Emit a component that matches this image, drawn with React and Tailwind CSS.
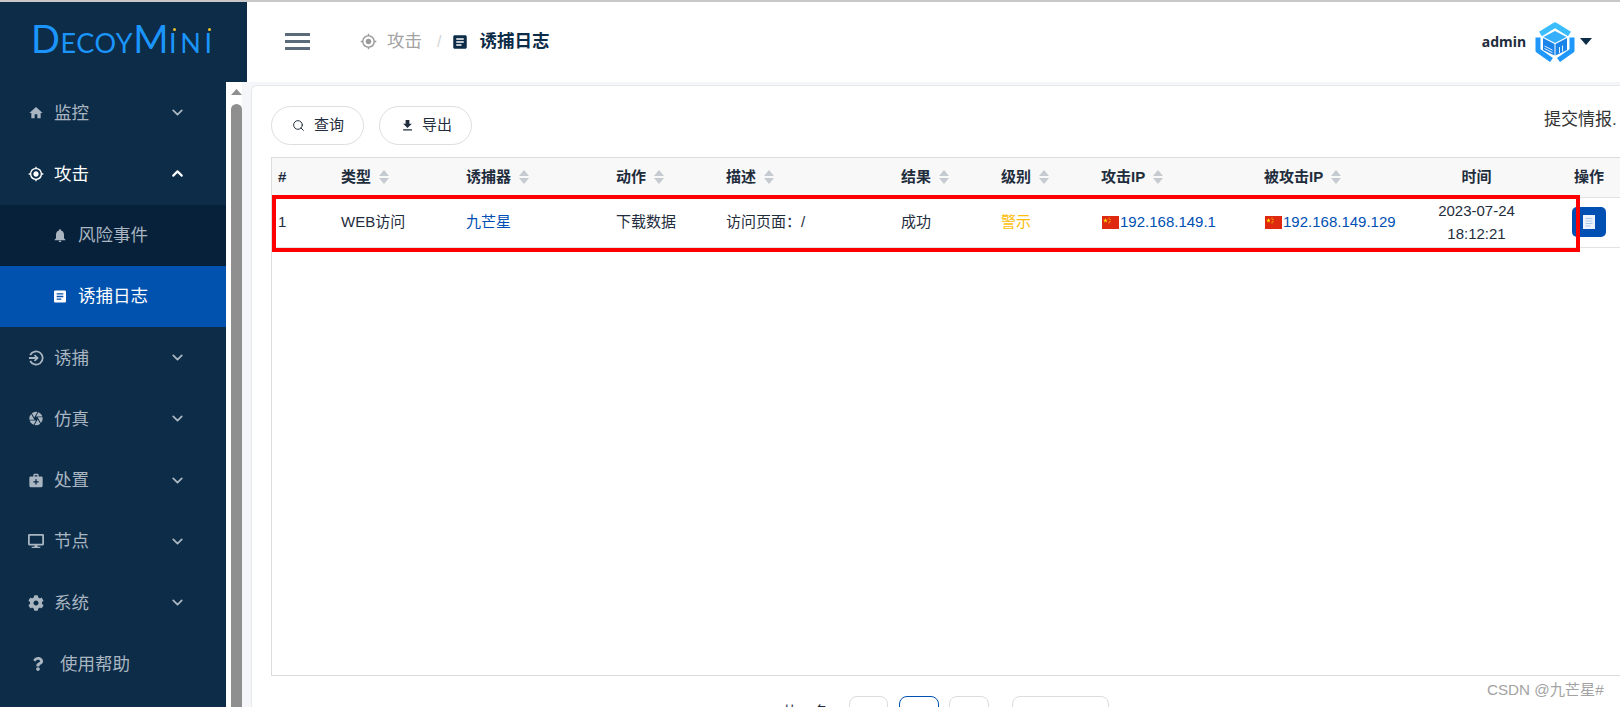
import React from "react";
import { MdHome, MdGpsFixed, MdNotifications, MdArticle, MdCamera, MdMedicalServices, MdFileDownload } from "react-icons/md";
import { FaCog, FaQuestion, FaDesktop } from "react-icons/fa";
import { ChevronDown, ChevronUp, Search } from "lucide-react";

const font = { fontFamily: '"Liberation Sans","Noto Sans CJK SC",sans-serif' };

function TrapIcon() {
  return (
    <svg width="16" height="16" viewBox="0 0 16 16" fill="none" stroke="currentColor" strokeWidth="1.8">
      <path d="M2.2 5a6.6 6.6 0 1 1 0 6" />
      <path d="M1 8h8M6.5 5.2 9.5 8l-3 2.8" />
    </svg>
  );
}

function Sort() {
  return (
    <svg width="10" height="14" viewBox="0 0 10 14" className="ml-[8px] shrink-0" fill="#c6cad1">
      <path d="M5 0 10 6H0z" />
      <path d="M0 8h10l-5 6z" />
    </svg>
  );
}

function Flag() {
  return (
    <svg width="17" height="13" viewBox="0 0 17 13" className="ml-[1px] mr-[1px] shrink-0">
      <rect width="17" height="13" fill="#de2910" />
      <path d="M3.5 2 4.1 3.7 5.9 3.7 4.4 4.8 5 6.5 3.5 5.4 2 6.5 2.6 4.8 1.1 3.7 2.9 3.7z" fill="#ffde00" />
      <circle cx="7" cy="2" r=".6" fill="#ffde00" />
      <circle cx="8" cy="3.5" r=".6" fill="#ffde00" />
      <circle cx="8" cy="5.3" r=".6" fill="#ffde00" />
      <circle cx="7" cy="6.8" r=".6" fill="#ffde00" />
    </svg>
  );
}

function Avatar() {
  return (
    <svg width="40" height="40" viewBox="0 0 40 40" fill="none">
      <path d="M5.5 12 20 3l14.5 9" stroke="#3bbdfb" strokeWidth="5.5" strokeLinejoin="round" />
      <path d="M3 15.5v13l13.5 9.5" stroke="#1f97fb" strokeWidth="5" strokeLinejoin="round" />
      <path d="M37 15.5v13l-13.5 9.5" stroke="#1f97fb" strokeWidth="5" strokeLinejoin="round" />
      <path d="M20 9 31.5 15 20 21 8.5 15z" fill="#35aefc" />
      <path d="M8 16l11.5 6v11.5L8 28z" fill="#1b84e8" />
      <path d="M32 16l-11.5 6v11.5L32 28z" fill="#1b84e8" />
      <path d="M9.5 24l8 4.2M9.5 26.5l8 4.2" stroke="#dff1ff" strokeWidth="1" />
      <path d="M24.5 25v6M27.5 23.5v6" stroke="#dff1ff" strokeWidth="1" />
    </svg>
  );
}

function Logo() {
  const big = "text-[38px] leading-none";
  const small = "text-[27px] leading-none";
  const Dot = ({ c }) => (
    <span className="relative">
      {c}
      <span className="absolute left-[4px] top-[-1px] h-[3px] w-[3px] rounded-full bg-[#ecc22a]" />
    </span>
  );
  return (
    <div className="flex items-baseline text-[#1b95fb] font-normal tracking-[0.6px]" style={{ fontFamily: "Lato, sans-serif" }}>
      <span className={big}>D</span>
      <span className={small}>ECOY</span>
      <span className={big}>M</span>
      <span className={small + " flex items-baseline gap-[3px]"}>
        <Dot c="I" />
        <span>N</span>
        <Dot c="I" />
      </span>
    </div>
  );
}

const menu = [
  { label: "监控", icon: <MdHome size={20} />, arrow: "down" },
  { label: "攻击", icon: <MdGpsFixed size={18} />, arrow: "up", open: true },
  { label: "风险事件", icon: <MdNotifications size={19} />, sub: true },
  { label: "诱捕日志", icon: <MdArticle size={19} />, sub: true, active: true },
  { label: "诱捕", icon: <TrapIcon />, arrow: "down" },
  { label: "仿真", icon: <MdCamera size={19} />, arrow: "down" },
  { label: "处置", icon: <MdMedicalServices size={19} />, arrow: "down" },
  { label: "节点", icon: <FaDesktop size={16} />, arrow: "down" },
  { label: "系统", icon: <FaCog size={16} />, arrow: "down" },
];

function MenuItem({ item }) {
  const bg = item.active ? "bg-[#0152ae] text-white" : item.sub ? "bg-[#07213a] text-[#a9b5c0]" : item.open ? "text-white" : "text-[#a9b5c0]";
  return (
    <div className={"flex h-[61.25px] items-center " + bg + (item.sub ? " pl-[52px]" : " pl-[28px]")}>
      <span className={"flex w-[16px] shrink-0 items-center justify-center"}>{item.icon}</span>
      <span className="ml-[10px] text-[17.5px]">{item.label}</span>
      {item.arrow === "down" && <ChevronDown size={17} strokeWidth={2.6} className="ml-auto mr-[40px]" />}
      {item.arrow === "up" && <ChevronUp size={17} strokeWidth={3} className="ml-auto mr-[40px]" />}
    </div>
  );
}

const cols = [
  ["#", 63, false],
  ["类型", 125, true],
  ["诱捕器", 150, true],
  ["动作", 110, true],
  ["描述", 175, true],
  ["结果", 100, true],
  ["级别", 100, true],
  ["攻击IP", 163, true],
  ["被攻击IP", 163, true],
];

function Ip({ v }) {
  return (
    <span className="flex items-center text-[15px] text-[#0050b3]">
      <Flag />
      {v}
    </span>
  );
}

export default function App() {
  return (
    <div className="flex h-[707px] w-[1620px] flex-col overflow-hidden border-t-2 border-[#c8c8c8] bg-white text-[#1f2d3d]" style={font}>
      <div className="flex h-[80px] shrink-0">
        <div className="flex w-[247px] shrink-0 items-center bg-[#0d2c48] pb-[8px] pl-[31px]">
          <Logo />
        </div>
        <div className="flex flex-1 items-center pb-[1px]">
          <svg width="25" height="17" viewBox="0 0 25 17" className="ml-[38px]" fill="#5b6b7a">
            <rect width="25" height="3" />
            <rect y="7" width="25" height="3" />
            <rect y="14" width="25" height="3" />
          </svg>
          <MdGpsFixed size={17} className="ml-[50px] text-[#9a9a9a]" />
          <span className="ml-[10px] text-[17.5px] text-[#a3a3a3]">攻击</span>
          <span className="ml-[15px] text-[16px] text-[#d4d4d4]">/</span>
          <MdArticle size={18} className="ml-[10px] text-[#0d2c48]" />
          <span className="ml-[10px] text-[17.5px] font-bold text-[#0d2c48]">诱捕日志</span>
          <span className="ml-auto text-[14px] font-bold text-[#1f2d3d]" style={{ fontFamily: '"Noto Sans",sans-serif' }}>admin</span>
          <span className="ml-[9px]"><Avatar /></span>
          <svg width="12" height="7" viewBox="0 0 12 7" className="ml-[5px] mr-[28px]" fill="#0d2c48">
            <path d="M0 0h12L6 7z" />
          </svg>
        </div>
      </div>

      <div className="flex min-h-0 flex-1">
        <div className="w-[226px] shrink-0 bg-[#0d2c48]">
          {menu.map((m) => (
            <MenuItem key={m.label} item={m} />
          ))}
          <div className="flex h-[61.25px] items-center pl-[31px] text-[#a9b5c0]">
            <FaQuestion size={14} />
            <span className="ml-[15px] text-[17.5px]">使用帮助</span>
          </div>
        </div>

        <div className="flex w-[16px] shrink-0 flex-col items-center bg-white pl-[5px] pt-[7px]">
          <svg width="11" height="6" viewBox="0 0 11 6" fill="#8f8f8f">
            <path d="M5.5 0 11 6H0z" />
          </svg>
          <div className="mt-[9px] w-[11px] flex-1 rounded-t-full bg-[#8f8f8f]" />
        </div>

        <div className="relative min-w-0 flex-1 bg-[#f5f6f9] pl-[9px] pt-[3px]">
          <div className="h-full w-[1450px] rounded-tl-md border-l border-t border-[#e9e9e9] bg-white pl-[19px] pt-[20px]">
            <div className="flex w-[1376px] items-start">
              <button className="flex h-[39px] w-[93px] items-center rounded-full border border-[#dedede] bg-white pl-[20px] text-[15px]">
                <Search size={13} strokeWidth={1.8} />
                <span className="ml-[9px]">查询</span>
              </button>
              <button className="ml-[15px] flex h-[39px] w-[93px] items-center rounded-full border border-[#dedede] bg-white pl-[20px] text-[15px]">
                <MdFileDownload size={15} />
                <span className="ml-[7px]">导出</span>
              </button>
              <span className="ml-auto w-[103px] whitespace-nowrap pt-[1px] text-[17px] text-[#333]">提交情报.</span>
            </div>

            <div className="relative mt-[12px] h-[519px] w-[1376px] border border-[#dcdcdc]">
              <table className="w-[1374px] table-fixed border-collapse text-[15px]">
                <colgroup>
                  {cols.map((c) => (
                    <col key={c[0]} style={{ width: c[1] }} />
                  ))}
                  <col style={{ width: 111 }} />
                  <col style={{ width: 114 }} />
                </colgroup>
                <thead>
                  <tr className="h-[39px] border-b border-[#e3e3e3] bg-[#f8f8f8]">
                    {cols.map((c) => (
                      <th key={c[0]} className="px-[6px] text-left font-bold">
                        <span className="flex items-center">
                          {c[0]}
                          {c[2] && <Sort />}
                        </span>
                      </th>
                    ))}
                    <th className="text-center font-bold">时间</th>
                    <th className="text-center font-bold">操作</th>
                  </tr>
                </thead>
                <tbody>
                  <tr className="h-[50px] border-b border-[#e3e3e3]">
                    <td className="px-[6px]">1</td>
                    <td className="px-[6px]">WEB访问</td>
                    <td className="px-[6px] text-[#0050b3]">九芒星</td>
                    <td className="px-[6px]">下载数据</td>
                    <td className="px-[6px]">访问页面：/</td>
                    <td className="px-[6px]">成功</td>
                    <td className="px-[6px] text-[#fcbc0a]">警示</td>
                    <td className="px-[6px]"><Ip v="192.168.149.1" /></td>
                    <td className="px-[6px]"><Ip v="192.168.149.129" /></td>
                    <td className="text-center leading-[23px]">2023-07-24<br />18:12:21</td>
                    <td className="text-center">
                      <span className="inline-flex h-[30px] w-[34px] items-center justify-center rounded-[5px] bg-[#0050b3] align-middle">
                        <svg width="12" height="14" viewBox="0 0 12 14">
                          <rect width="12" height="14" fill="#eef2fa" />
                          <path d="M2.5 3.5h7M2.5 6h7M2.5 8.5h7M2.5 11h5" stroke="#a9c9ec" strokeWidth="1" />
                        </svg>
                      </span>
                    </td>
                  </tr>
                </tbody>
              </table>
              <div className="absolute left-0 top-[37px] h-[57px] w-[1308px] border-4 border-[#ff0000]" />
            </div>

            <div className="mt-[20px] flex items-start pl-[511px] text-[15px]">
              <span className="w-[67px] pt-[4px] leading-[24px]">共 1 条</span>
              <span className="flex h-[39px] w-[39px] items-center justify-center rounded-lg border border-[#dcdcdc]">‹</span>
              <span className="ml-[11px] flex h-[39px] w-[40px] items-center justify-center rounded-lg border border-[#0050b3] text-[#0050b3]">1</span>
              <span className="ml-[10px] flex h-[39px] w-[40px] items-center justify-center rounded-lg border border-[#dcdcdc]">›</span>
              <span className="ml-[23px] flex h-[39px] w-[97px] items-center justify-center rounded-lg border border-[#dcdcdc]">10 条/页</span>
            </div>
          </div>
        </div>
      </div>

      <div className="absolute left-[1487px] top-[680px] text-[15.2px] leading-[20px] text-[#a3a3a3]">CSDN @九芒星#</div>
    </div>
  );
}
